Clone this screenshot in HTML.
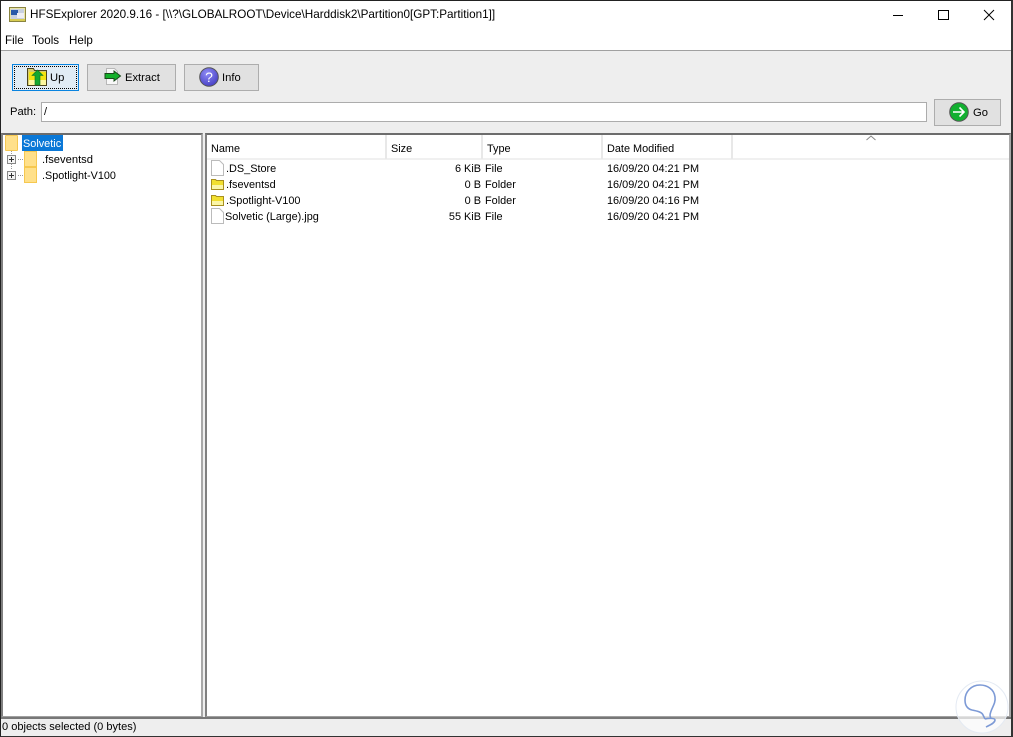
<!DOCTYPE html>
<html><head><meta charset="utf-8">
<style>
html,body{margin:0;padding:0;width:1013px;height:737px;overflow:hidden;background:#fff}
body{position:relative;font-family:"Liberation Sans",sans-serif;font-size:10.9px;color:#000}
.a{position:absolute;white-space:nowrap;line-height:14px}
.box{position:absolute;box-sizing:border-box}
.btn{position:absolute;box-sizing:border-box;background:#e1e1e1;border:1px solid #adadad}
.r{text-align:right}
.p{position:absolute;box-sizing:border-box;background:#fff;border-top:2px solid #6c6c6c;border-left:1px solid #808080;border-right:2px solid #a8a8a8;border-bottom:1px solid #a0a0a0}
</style></head><body>
<div class="box" style="left:1px;top:50px;width:1010px;height:687px;background:#eee;border-top:1px solid #a0a0a0"></div>

<svg class="box" style="left:9px;top:7px" width="18" height="16" viewBox="0 0 18 16"><rect x=".5" y=".5" width="16" height="14" fill="#e8e4a8" stroke="#8a8440"/><rect x="2" y="2" width="13" height="10" fill="#c8d0e0"/><rect x="2" y="3" width="7" height="5" fill="#2a5aa8"/><rect x="8" y="6" width="7" height="5" fill="#eeeef4"/><rect x="1" y="12" width="15" height="2" fill="#d8cc50"/></svg>
<div class="a" style="left:30px;top:8px;font-size:11.7px">HFSExplorer 2020.9.16 - [\\?\GLOBALROOT\Device\Harddisk2\Partition0[GPT:Partition1]]</div>
<div class="box" style="left:893px;top:15px;width:10px;height:1px;background:#000"></div>
<div class="box" style="left:938px;top:10px;width:11px;height:10px;border:1px solid #000"></div>
<svg class="box" style="left:983px;top:9px" width="12" height="12"><path d="M1 1L11 11M11 1L1 11" stroke="#000" fill="none"/></svg>
<div class="a" style="left:5px;top:34px;font-size:11.6px">File</div>
<div class="a" style="left:32px;top:34px;font-size:11.6px">Tools</div>
<div class="a" style="left:69px;top:34px;font-size:11.6px">Help</div>

<div class="btn" style="left:12px;top:64px;width:67px;height:27px;background:#e1ecf5;border:1px solid #0a84e0"></div>
<div class="box" style="left:14px;top:66px;width:63px;height:23px;border:1px dotted #000"></div>
<svg class="box" style="left:27px;top:67px" width="21" height="20" viewBox="0 0 21 20"><path d="M.5 1.500h6l1 2h12v15H.5z" fill="#d8cc70" stroke="#4a4420"/><rect x="2" y="5" width="17" height="8" fill="#f2e410"/><rect x="2" y="13" width="17" height="5" fill="#fdf8a0"/><path d="M10.500 3l5.500 5.500h-3V18H8V8.500H5z" fill="#14a830" stroke="#0c7020" stroke-width=".6"/></svg>
<div class="a" style="left:50px;top:71px;font-size:11.2px">Up</div>

<div class="btn" style="left:87px;top:64px;width:89px;height:27px"></div>
<svg class="box" style="left:103px;top:68px" width="20" height="18" viewBox="0 0 20 18"><path d="M3.500.500h8l3 3v13h-11z" fill="#f8f8f8" stroke="#b8b8b8"/><path d="M2 5.500h9V3l6.500 5L11 13v-2.500H2z" fill="#14b02a" stroke="#1a4a1a"/></svg>
<div class="a" style="left:125px;top:71px;font-size:11.2px">Extract</div>

<div class="btn" style="left:184px;top:64px;width:75px;height:27px"></div>
<svg class="box" style="left:199px;top:67px" width="20" height="20" viewBox="0 0 20 20"><defs><radialGradient id="p" cx=".4" cy=".3" r=".8"><stop offset="0" stop-color="#8f8cf5"/><stop offset="1" stop-color="#4038c0"/></radialGradient></defs><circle cx="10" cy="10" r="9.300" fill="url(#p)" stroke="#555"/><text x="10" y="15" font-family="Liberation Sans" font-size="14" fill="#fff" text-anchor="middle">?</text></svg>
<div class="a" style="left:222px;top:71px;font-size:11.2px">Info</div>

<div class="a" style="left:10px;top:105px;font-size:11.2px">Path:</div>
<div class="box" style="left:41px;top:102px;width:886px;height:20px;background:#fff;border:1px solid #acacac"></div>
<div class="a" style="left:44px;top:105px">/</div>
<div class="btn" style="left:934px;top:99px;width:67px;height:27px"></div>
<svg class="box" style="left:949px;top:102px" width="20" height="20" viewBox="0 0 20 20"><circle cx="10" cy="10" r="9.300" fill="#12b030" stroke="#555"/><path d="M4 10h11M10.500 5.500L15 10l-4.500 4.500" stroke="#fff" stroke-width="1.600" fill="none"/></svg>
<div class="a" style="left:973px;top:106px;font-size:11.2px">Go</div>

<div class="p" style="left:1px;top:133px;width:202px;height:584px;border-left:2px solid #808080"></div>
<div class="p" style="left:205px;top:133px;width:806px;height:584px;border-left:2px solid #808080"></div>

<div class="box" style="left:5px;top:135px;width:13px;height:16px;background:#ffe08a;border:1px solid #f6c850;border-radius:1px"></div>
<div class="box" style="left:22px;top:135px;width:41px;height:16px;background:#0a78d7"></div>
<div class="a" style="left:23px;top:137px;color:#fff">Solvetic</div>
<svg class="box" style="left:6px;top:150px" width="20" height="34"><path d="M5.500 1v4M5.500 14v6" stroke="#999" stroke-dasharray="1 1"/><path d="M12 9.500h7M12 25.500h7" stroke="#999" stroke-dasharray="1 1"/><rect x="1.500" y="5.500" width="8" height="8" fill="#f4f4f4" stroke="#888"/><rect x="1.500" y="21.500" width="8" height="8" fill="#f4f4f4" stroke="#888"/><path d="M3 9.500h5M5.500 7v5M3 25.500h5M5.500 23v5" stroke="#333"/></svg>
<div class="box" style="left:24px;top:151px;width:13px;height:16px;background:#ffe08a;border:1px solid #f6c850"></div>
<div class="box" style="left:24px;top:167px;width:13px;height:16px;background:#ffe08a;border:1px solid #f6c850"></div>
<div class="a" style="left:42px;top:153px;font-size:11.2px">.fseventsd</div>
<div class="a" style="left:42px;top:169px;font-size:10.8px">.Spotlight-V100</div>

<div class="box" style="left:207px;top:135px;width:802px;height:25px;border-bottom:2px solid #f0f0f0"></div>
<div class="box" style="left:385px;top:135px;width:2px;height:24px;background:#e8e8e8"></div>
<div class="box" style="left:481px;top:135px;width:2px;height:24px;background:#e8e8e8"></div>
<div class="box" style="left:601px;top:135px;width:2px;height:24px;background:#e8e8e8"></div>
<div class="box" style="left:731px;top:135px;width:2px;height:24px;background:#e8e8e8"></div>
<svg class="box" style="left:866px;top:135px" width="10" height="6"><path d="M.5 5L5 1l4.500 4" stroke="#888" fill="none"/></svg>
<div class="a" style="left:211px;top:142px">Name</div>
<div class="a" style="left:391px;top:142px">Size</div>
<div class="a" style="left:487px;top:142px">Type</div>
<div class="a" style="left:607px;top:142px">Date Modified</div>

<svg class="box" style="left:211px;top:160px" width="13" height="16"><path d="M.5.500h8l4 4v11H.5z" fill="#fff" stroke="#bbb"/></svg>
<svg class="box" style="left:211px;top:178px" width="13" height="12"><path d="M.5 1.500h4l1 1h7v9H.5z" fill="#f2e030" stroke="#a89020"/><rect x="1" y="7" width="11" height="4" fill="#fbf6a8"/></svg>
<svg class="box" style="left:211px;top:194px" width="13" height="12"><path d="M.5 1.500h4l1 1h7v9H.5z" fill="#f2e030" stroke="#a89020"/><rect x="1" y="7" width="11" height="4" fill="#fbf6a8"/></svg>
<svg class="box" style="left:211px;top:208px" width="13" height="16"><path d="M.5.500h8l4 4v11H.5z" fill="#fff" stroke="#bbb"/></svg>

<div class="a" style="left:226px;top:162px">.DS_Store</div>
<div class="a" style="left:226px;top:178px">.fseventsd</div>
<div class="a" style="left:226px;top:194px">.Spotlight-V100</div>
<div class="a" style="left:225px;top:210px">Solvetic (Large).jpg</div>

<div class="a r" style="left:400px;width:81px;top:162px">6 KiB</div>
<div class="a r" style="left:400px;width:81px;top:178px">0 B</div>
<div class="a r" style="left:400px;width:81px;top:194px">0 B</div>
<div class="a r" style="left:400px;width:81px;top:210px">55 KiB</div>
<div class="a" style="left:485px;top:162px">File</div>
<div class="a" style="left:485px;top:178px">Folder</div>
<div class="a" style="left:485px;top:194px">Folder</div>
<div class="a" style="left:485px;top:210px">File</div>
<div class="a" style="left:607px;top:162px">16/09/20 04:21 PM</div>
<div class="a" style="left:607px;top:178px">16/09/20 04:21 PM</div>
<div class="a" style="left:607px;top:194px">16/09/20 04:16 PM</div>
<div class="a" style="left:607px;top:210px">16/09/20 04:21 PM</div>

<div class="box" style="left:1px;top:717px;width:1010px;height:2px;background:#777"></div>
<div class="a" style="left:2px;top:720px;font-size:11.05px">0 objects selected (0 bytes)</div>

<div class="box" style="left:0;top:0;width:1013px;height:737px;border:1px solid #222;border-right:2px solid #333;border-bottom:1px solid #333"></div>

<svg class="box" style="left:955px;top:680px" width="58" height="57" viewBox="0 0 58 57"><circle cx="27" cy="27" r="26" fill="#fff" fill-opacity=".7" stroke="#e4eaf3"/><path d="M35 35C36 28 41 24 40 17 39 9 32 5 25 5 16 5 10 12 10 20c0 6 3 9 7 10 5 1 10 2 11 5 1 2 2 4 2 4M35 35c0 2 1 3 1 4M30 39c4-1 10-1 10 1 0 3-5 5-9 7" fill="none" stroke="#7d9ad6" stroke-width="1.600"/></svg>
</body></html>
